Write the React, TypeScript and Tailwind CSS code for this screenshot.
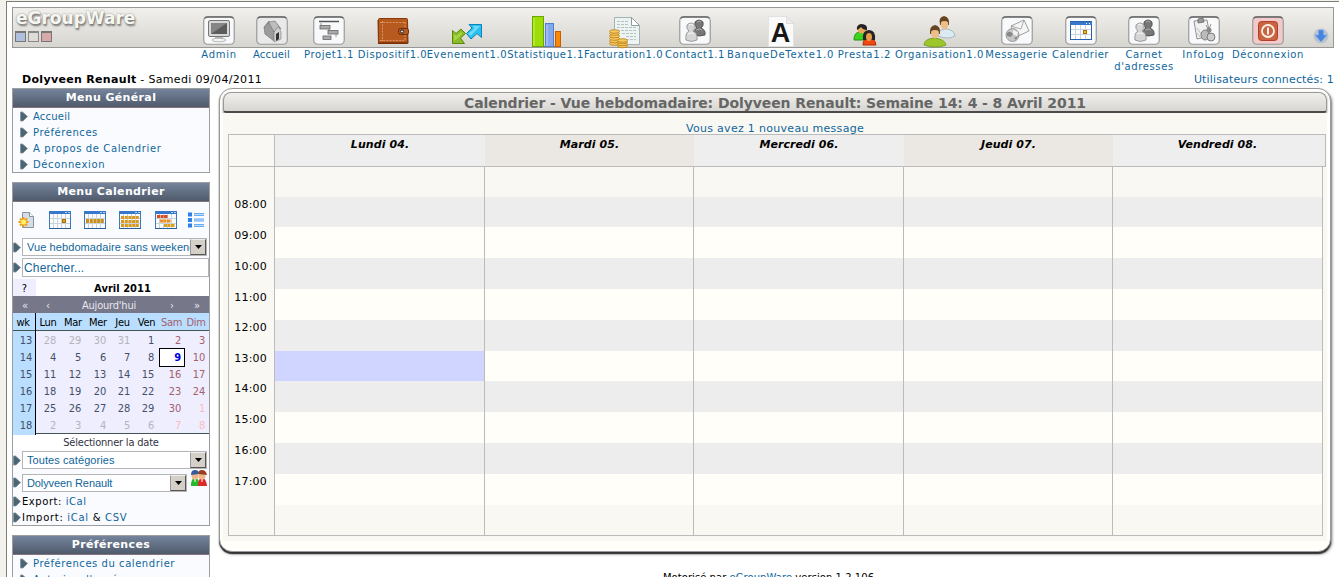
import React from "react";

type K = string;

function Art({ k }: { k: K }) {
  switch (k) {
    case "admin":
      return (
        <g>
          <rect x="5.500" y="5.500" width="21" height="16" rx="1.500" fill="#d8d8d8" stroke="#777" />
          <rect x="8" y="8" width="16" height="11" fill="#5c5c5c" />
          <path d="M8 19V8h16z" fill="#858585" />
          <path d="M12 22h8l-1 3h-6z" fill="#bbb" />
          <ellipse cx="16" cy="25" rx="7" ry="1.800" fill="#f4f4f4" stroke="#999" strokeWidth=".7" />
        </g>
      );
    case "home":
      return (
        <g>
          <path d="m8 12 5-6 5 9v11l-9-7z" fill="#9b9b9b" stroke="#777" strokeWidth=".7" />
          <path d="m18 16 4-6 3 7v7l-7 3z" fill="#d2d2d2" stroke="#888" strokeWidth=".7" />
          <path d="m8 12 5-5 6-1 6 8-3-2-4 5-5-9-4 5z" fill="#bdbdbd" stroke="#777" strokeWidth=".7" />
          <path d="M20 26v-7l3-2v7z" fill="#333" />
        </g>
      );
    case "project":
      return (
        <g>
          <path d="M6 6.500h20" stroke="#555" strokeWidth="1.500" />
          <path d="M8 8v3M16 13v3M23 18v4" stroke="#999" />
          <g fill="#aaa" stroke="#666" strokeWidth=".8">
            <rect x="7" y="10.500" width="10" height="3.500" />
            <rect x="15" y="15.500" width="10" height="3.500" />
            <rect x="10" y="21" width="8" height="3.500" />
          </g>
        </g>
      );
    case "wallet":
      return (
        <g>
          <path d="M.5 4h30.500l.5 23-1 1H1z" fill="#7c3008" />
          <rect x="1.500" y="2.500" width="29" height="24" rx="1" fill="#b65a20" stroke="#8a3b0c" />
          <path d="M3 6.500h26M3 24.500h24M5.500 5v20M28 6v19" stroke="#e8a374" strokeDasharray="2 1.200" strokeWidth=".8" fill="none" />
          <rect x="21.500" y="12.500" width="10" height="6" rx="2" fill="#b65a20" stroke="#6e2c08" />
          <circle cx="25" cy="15.500" r="1.600" fill="#ddd" stroke="#222" />
        </g>
      );
    case "event":
      return (
        <g strokeLinejoin="round">
          <path d="M1.500 27.500V14.500l3.500 3 5-4.500 4.500 4.500-5 4.500 4 5.500z" fill="#8abb28" stroke="#5c8a0a" />
          <path d="M3 25v-7l2.500 2 4.500-4 1.500 1.500-5 5z" fill="#a9d444" />
          <path d="M30.500 8.500H18l3 3.500-5.500 5.500 4.500 5.500 6-5.500 4.500 4z" fill="#2bc0f0" stroke="#0983bb" />
          <path d="M29 10h-7l1.500 2.500-6 5 2 2.500z" fill="#6fdcfb" />
        </g>
      );
    case "stats":
      return (
        <g>
          <path d="M2 30.500h29" stroke="#777" />
          <rect x="2.500" y=".5" width="11" height="30" fill="#9ddd08" stroke="#6ba500" />
          <path d="M4 2v28" stroke="#c8f558" />
          <rect x="15.500" y="7.500" width="8" height="23" fill="#83a9ec" stroke="#557fcb" />
          <path d="M17 9v21" stroke="#b8d0ff" />
          <rect x="25.500" y="15.500" width="5" height="15" fill="#f98806" stroke="#cd5b00" />
        </g>
      );
    case "invoice":
      return (
        <g>
          <path d="M6.500 1.500h17l8 8v19h-25z" fill="#edf3f2" stroke="#a5b3b3" />
          <path d="M23.500 1.500v8h8z" fill="#fff" stroke="#8e9c9c" />
          <path d="M9 5.500h11M9 8.500h12M9 11.500h19M9 14.500h19M14 17.500h14M18 20.500h10M18 23.500h10" stroke="#b7c3c3" strokeDasharray="3 1" />
          <g fill="#f6c95c" stroke="#b77b14" strokeWidth=".8">
            {[27.5, 25, 22.5, 20, 17.5, 15.5].map((y) => <ellipse key={y} cx="6.500" cy={y} rx="5" ry="1.800" />)}
            {[30, 28, 26, 24.5].map((y) => <ellipse key={y} cx="14.500" cy={y} rx="5" ry="1.800" />)}
          </g>
        </g>
      );
    case "people":
      return (
        <g strokeWidth=".8">
          <path d="M15 20q0-6 3-7-3-2-2-6 4-4 8 0 1 4-2 6 5 2 4 7-6 2-11 0z" fill="#777" stroke="#444" />
          <path d="M18 7q3-2 4 0M17 15q4-2 6 0" stroke="#bbb" fill="none" />
          <path d="M7 25q-1-7 3-9-3-2-2-6 4-4 8 0 1 4-2 6 5 2 4 9-6 3-11 0z" fill="#d5d5d5" stroke="#888" />
          <path d="M10 10q2-2 4 0M9 19q4-2 6 0" stroke="#fff" fill="none" />
        </g>
      );
    case "text":
      return (
        <g>
          <path d="M3.500.5h18l7 7v23h-25z" fill="#fafafa" stroke="#e2e2e2" />
          <path d="M21.500.5v7h7z" fill="#eee" stroke="#ddd" />
          <text x="16" y="26" textAnchor="middle" fontFamily="Liberation Sans" fontWeight="bold" fontSize="27" fill="#171717">A</text>
        </g>
      );
    case "duo":
      return (
        <g>
          <path d="M5 24q0-8 6-8 7 0 8 8z" fill="#3bd51d" stroke="#22930e" />
          <circle cx="13" cy="13" r="4.500" fill="#eba75b" />
          <path d="M8 14q-1-5 4-6 7 0 6 6-4 0-6-3-2 2-4 3z" fill="#222" />
          <path d="M14 29q0-7 6-7 6 0 7 7z" fill="#f04812" stroke="#b52f05" />
          <path d="M14 24q-1-10 6-10t6 10z" fill="#252525" />
          <ellipse cx="20" cy="21" rx="3" ry="4" fill="#e79c4b" />
        </g>
      );
    case "org":
      return (
        <g>
          <path d="M14 20q0-6 7-7 9 0 10 7-7 4-17 0z" fill="#dcebf2" stroke="#96b1bd" strokeWidth=".8" />
          <path d="M16 9q-2-8 4-9 6 1 5 9z" fill="#684521" />
          <ellipse cx="20.500" cy="8.500" rx="3.700" ry="5" fill="#edbe8a" />
          <path d="M16.500 6q1-4 4-4t4 4q-4-2-8 0z" fill="#684521" />
          <path d="M0 29q0-6 10-7 11 1 12 7-10 4-22 0z" fill="#9dc62b" stroke="#6d9812" strokeWidth=".8" />
          <path d="M6 18q-1-8 5-9 6 1 5 9z" fill="#684521" />
          <ellipse cx="11" cy="17.500" rx="4" ry="5" fill="#edbe8a" />
          <path d="M7 15q1-4 4-4t4 4q-4-2-8 0z" fill="#684521" />
        </g>
      );
    case "mail":
      return (
        <g strokeWidth=".8">
          <path d="m10 11 13-6 5 11-13 6z" fill="#f5f5f5" stroke="#888" />
          <path d="m10 11 10 3 3-9" fill="none" stroke="#999" />
          <circle cx="11.500" cy="20" r="6.500" fill="#c6c6c6" stroke="#888" />
          <path d="M6 18q3-3 6 1l-2 3-4-1zM13 23l4-2-2 4z" fill="#888" />
          <path d="m12 15 5 2-1 4-4-2z" fill="#f2f2f2" />
        </g>
      );
    case "calendar":
      return (
        <g>
          <rect x="5.500" y="6.500" width="21" height="18" fill="#fff" stroke="#2862ae" />
          <path d="M5 7h22v3H5z" fill="#3878ca" />
          <path d="M21 8.500h1M24 8.500h1" stroke="#fff" />
          <path d="M6 14.500h20M6 19.500h20M10.500 10v14M15.500 10v14M20.500 10v14" stroke="#ccd4df" />
          <rect x="18.500" y="15.500" width="3" height="3" fill="#f5b428" stroke="#a96f00" />
        </g>
      );
    case "infolog":
      return (
        <g strokeWidth=".8">
          <path d="m6 6 13-1 3 16-13 3z" fill="#f1f1f1" stroke="#777" />
          <path d="m10 4 5-1 1 4-6 1z" fill="#999" stroke="#666" />
          <path d="M18 10l2 4M23 9l-2 5" stroke="#777" />
          <ellipse cx="17" cy="20" rx="4" ry="5" fill="#bbb" stroke="#666" />
          <circle cx="23" cy="22" r="4" fill="#ccc" stroke="#666" />
          <circle cx="21" cy="15" r="2.500" fill="#888" />
          <path d="m9 13 4 6M9 18l3 4" stroke="#aaa" />
        </g>
      );
    default:
      return (
        <g>
          <rect x="6.500" y="6.500" width="19" height="19" rx="3" fill="#c96443" stroke="#ae3f28" />
          <circle cx="16" cy="16" r="6" fill="none" stroke="#fff0e5" strokeWidth="1.800" />
          <path d="M16 12.500v7" stroke="#fff" strokeWidth="1.800" />
        </g>
      );
  }
}

const apps = [
  { n: "Admin", k: "admin", f: 1, c: "ml-[188px] w-[36px] tracking-[0.7px]" },
  { n: "Accueil", k: "home", f: 1, c: "ml-[16px] w-[37px] tracking-[0.2px]" },
  { n: "Projet1.1", k: "project", f: 1, c: "ml-[14px] w-[50px] tracking-[0.6px]" },
  { n: "Dispositif1.0", k: "wallet", f: 0, c: "ml-[4px] w-[69px] tracking-[0.55px]" },
  { n: "Evenement1.0", k: "event", f: 0, c: "w-[80px] tracking-[0.65px]" },
  { n: "Statistique1.1", k: "stats", f: 0, c: "w-[77px] tracking-[0.5px]" },
  { n: "Facturation1.0", k: "invoice", f: 0, c: "w-[79px] tracking-[0.5px]" },
  { n: "Contact1.1", k: "people", f: 1, c: "ml-[2px] w-[60px] tracking-[0.5px]" },
  { n: "BanqueDeTexte1.0", k: "text", f: 0, c: "ml-[2px] w-[107px] tracking-[0.8px]" },
  { n: "Presta1.2", k: "duo", f: 0, c: "ml-[4px] w-[53px] tracking-[0.7px]" },
  { n: "Organisation1.0", k: "org", f: 0, c: "ml-[4px] w-[89px] tracking-[0.6px]" },
  { n: "Messagerie", k: "mail", f: 1, c: "ml-px w-[63px] tracking-[0.55px]" },
  { n: "Calendrier", k: "calendar", f: 1, c: "ml-[4px] w-[57px] tracking-[0.5px]" },
  { n: "Carnet\nd'adresses", k: "people", f: 1, c: "ml-[5px] w-[60px] tracking-[0.6px]" },
  { n: "InfoLog", k: "infolog", f: 1, c: "ml-[8px] w-[43px] tracking-[0.8px]" },
  { n: "Déconnexion", k: "off", f: 2, c: "ml-[7px] w-[72px] tracking-[0.6px]" },
];

function AppItem({ n, k, f, c }: { n: string; k: K; f: number; c: string }) {
  return (
    <div className={`flex shrink-0 flex-col items-center text-center text-[10px] leading-[12px] text-[#0f669b] ${c}`}>
      <svg width="32" height="32" viewBox="0 0 32 32" className="mt-2 shrink-0 overflow-visible">
        {f > 0 && (
          <>
            <rect x=".75" y=".75" width="30.500" height="27.500" rx="4" fill={f === 2 ? "#f3c9c9" : k === "home" ? "#e9e9e9" : "#f8f9fb"} stroke="#9b9b9b" strokeWidth="1.200" />
            <path d="M2 2.500Q2 1 5 1h22q3 0 3 1.500" stroke="#666" strokeWidth="1.500" fill="none" />
          </>
        )}
        <g transform={f > 0 ? "translate(0 -1)" : undefined}><Art k={k} /></g>
      </svg>
      <span className="mt-px whitespace-pre">{n}</span>
    </div>
  );
}

function Arrow({ className = "" }: { className?: string }) {
  return (
    <svg width="8" height="11" viewBox="0 0 8 11" className={`shrink-0 ${className}`}>
      <path d="M.5 1h2L7.500 5.500 3 10H.5z" fill="#4b6575" stroke="#7d939e" strokeWidth=".8" />
    </svg>
  );
}

function Box({ title, children, className = "" }: { title: string; children: React.ReactNode; className?: string }) {
  return (
    <section className={`w-[198px] shrink-0 border border-[#9c9da1] bg-[#fafbff] ${className}`}>
      <h2 className="h-[19px] border-b border-[#85747c] bg-linear-to-b from-[#75849c] to-[#4f5a6b] text-center text-[11px] leading-[17px] font-bold tracking-[0.350px] text-white">
        {title}
      </h2>
      {children}
    </section>
  );
}

function MenuLink({ t, c }: { t: string; c: string }) {
  return (
    <li className={`flex h-4 items-center pl-[7px] text-[10px] text-[#0f669b] ${c}`}>
      <Arrow className="mr-[5px]" />
      {t}
    </li>
  );
}

function ViewIcon({ v }: { v: number }) {
  return (
    <svg width="22" height="18" viewBox="0 0 22 18">
      <path d="M1 7.500h20M1 12.500h20M4.500 3v14M8.500 3v14M12.500 3v14M16.500 3v14" stroke="#cbd3da" />
      <rect x=".5" y=".5" width="21" height="17" fill="none" stroke="#3e7abd" />
      <path d="M0 0h22v3H0z" fill="#3878ca" />
      <path d="M0 17.500h22" stroke="#2a5f9e" />
      <path d="M16 1.500h2M19 1.500h2" stroke="#b4d0f5" />
      {v === 1 && <rect x="13.500" y="8.500" width="3" height="3" fill="#dca21e" stroke="#a97508" />}
      {v === 2 && <path d="M2 10h18" stroke="#c99019" strokeWidth="4" strokeDasharray="3 .7" />}
      {v === 3 && <path d="M2 6.500h18M2 10.500h18M2 14.500h18" stroke="#d69a1c" strokeWidth="3.200" strokeDasharray="3 .7" />}
      {v === 4 && (
        <g strokeWidth="3.200" strokeDasharray="3 .5">
          <path d="M2 5.500h11" stroke="#dc4b1e" />
          <path d="M5 10h11" stroke="#ee8c1c" />
          <path d="M9 14.500h11" stroke="#dba01c" />
        </g>
      )}
    </svg>
  );
}

function Select({ t, c }: { t: string; c: string }) {
  return (
    <div className={`flex h-[18px] shrink-0 border border-[#b5b5b5] bg-white font-['Liberation_Sans'] text-[11px] leading-[17px] text-[#0f669b] ${c}`}>
      <span className="min-w-0 grow overflow-hidden pl-1 whitespace-nowrap">{t}</span>
      <span className="flex w-4 shrink-0 items-center justify-center border border-t-[#eee] border-r-[#555] border-b-[#555] border-l-[#999] bg-[#d4d0c8]">
        <svg width="7" height="4" viewBox="0 0 7 4"><path d="M0 0h7L3.500 4z" fill="#000" /></svg>
      </span>
    </div>
  );
}

const weeks = [
  [13, 28, 29, 30, 31, 1, 2, 3],
  [14, 4, 5, 6, 7, 8, 9, 10],
  [15, 11, 12, 13, 14, 15, 16, 17],
  [16, 18, 19, 20, 21, 22, 23, 24],
  [17, 25, 26, 27, 28, 29, 30, 1],
  [18, 2, 3, 4, 5, 6, 7, 8],
];

function dayClass(r: number, i: number, d: number) {
  if (r === 1 && d === 9) return "border border-black bg-white font-bold text-[#0000dd] leading-[17px] pr-[3px]";
  const out = (r === 0 && d > 20) || r === 5 || (r === 4 && d === 1);
  if (i >= 6) return out ? "text-[#fbbcc0] pr-[4px]" : "text-[#a5606c] pr-[4px]";
  return out ? "text-[#b4b4bb] pr-[5px]" : "text-[#455068] pr-[5px]";
}

const cols = "grid grid-cols-[23px_25px_25px_25px_24px_24px_26px_24px]";

function MiniCalendar() {
  return (
    <div className="bg-white font-['DejaVu_Sans_Condensed','DejaVu_Sans'] text-[11px]">
      <div className="flex h-[17px] leading-[19px] text-black">
        <span className="w-[23px] bg-[#eeeeff] text-center">?</span>
        <b className="grow text-center text-[11px] tracking-[0.050px]">Avril 2011</b>
      </div>
      <div className="flex h-[17px] justify-between bg-[#77778a] pr-[9px] pl-[9px] leading-[19px] text-[#e8e8ee]">
        <span className="w-[24px]">«</span><span className="w-[16px]">‹</span>
        <span className="grow text-center tracking-[-0.200px]">Aujourd'hui</span>
        <span className="w-[18px] text-right">›</span><span className="w-[26px] text-right">»</span>
      </div>
      <div className={`${cols} h-[18px] border-b border-[#455] bg-[#b9deff] leading-[19px] tracking-[-0.300px] text-black`}>
        <span className="border-r border-black pr-[2px] text-center">wk</span>
        {["Lun", "Mar", "Mer", "Jeu", "Ven"].map((d) => <span key={d} className="pr-px text-center">{d}</span>)}
        <span className="pr-px text-center text-[#a5606c]">Sam</span>
        <span className="pr-[2px] text-center text-[#a5606c]">Dim</span>
      </div>
      {weeks.map((w, r) => (
        <div key={r} className={`${cols} h-[17px] bg-[#eeeeff] text-right leading-[19px] tracking-[-0.200px]`}>
          {w.map((d, i) =>
            i === 0 ? (
              <span key={i} className="border-r border-black bg-[#b9deff] pr-[3px] text-[#455068]">{d}</span>
            ) : (
              <span key={i} className={dayClass(r, i, d)}>{d}</span>
            ),
          )}
        </div>
      ))}
      <div className="h-[17px] border-t border-[#455] text-center leading-[17px] tracking-[-0.200px] text-[#334]">Sélectionner la date</div>
    </div>
  );
}

const days = ["Lundi 04.", "Mardi 05.", "Mercredi 06.", "Jeudi 07.", "Vendredi 08."];
const hours = ["", "08:00", "09:00", "10:00", "11:00", "12:00", "13:00", "14:00", "15:00", "16:00", "17:00", ""];
const heights = ["h-[30px]", "h-[30px]", "h-[31px]", "h-[31px]", "h-[31px]", "h-[31px]", "h-[30px]", "h-[31px]", "h-[31px]", "h-[31px]", "h-[31px]", "h-[30px]"];
const gridCols = "grid grid-cols-[46px_210px_209px_210px_209px_209px]";

function WeekGrid() {
  return (
    <div className="w-[1098px] text-[11px] text-black">
      <div className={`${gridCols} h-[33px] w-[1098px] border border-[#bbb] bg-[#ededed]`}>
        <span className="border-r border-[#bbb] bg-[#f9f8f3]" />
        {days.map((d, i) => (
          <span key={d} className={`text-center text-[11px] leading-[19px] font-bold tracking-[0.080px] italic ${i % 2 ? "bg-[#ebe8e3]" : "bg-[#eeeeee]"}`}>{d}</span>
        ))}
      </div>
      <div className="w-[1095px] border-x border-b border-[#bbb]">
        {hours.map((h, r) => (
          <div key={r} className={`${gridCols} ${heights[r]}`}>
            <span className={`border-r border-[#bbb] bg-[#f9f8f3] pr-[7px] text-right text-[11px] tracking-[0.200px] ${r > 1 && r < 5 ? "leading-[17px]" : "leading-[15px]"}`}>{h}</span>
            {days.map((d, i) => (
              <span
                key={d}
                className={`${i < 4 ? "border-r border-[#bbb]" : ""} ${
                  r === 6 && i === 0 ? "bg-[#d0d5ff]" : r === 0 || r === 11 ? "bg-[#f9f8f3]" : r % 2 ? "bg-[#ededed]" : "bg-[#fffef8]"
                }`}
              />
            ))}
          </div>
        ))}
      </div>
    </div>
  );
}

export default function App() {
  return (
    <div className="flex h-[577px] w-[1339px] overflow-hidden bg-[#f3f1ec] pt-px pl-[6px] font-['DejaVu_Sans',sans-serif] text-[11px] text-black">
      <div className="w-[1333px] shrink-0 border-t border-l border-[#7e7e76] bg-white pt-[5px] pl-[5px]">
        <header className="flex h-[41px] w-[1322px] items-start border border-[#979797] bg-linear-to-b from-[#f2f0ec] to-[#d6d5d0]">
          <div className="w-0 shrink-0 whitespace-nowrap">
            <div className="ml-[3px] text-[17px] leading-[20px] font-bold text-[#f7f7f2] [text-shadow:1px_2px_2px_#777,0_0_2px_#888]">eGroupWare</div>
            <div className="mt-[3px] ml-[2px] flex gap-[2px]">
              <span className="h-[11px] w-[11px] shrink-0 border border-t-2 border-[#777] bg-[#afc0df]" />
              <span className="h-[11px] w-[11px] shrink-0 border border-t-2 border-[#888] bg-[#dddcd8]" />
              <span className="h-[11px] w-[11px] shrink-0 border border-t-2 border-[#777] bg-[#d9a9aa]" />
            </div>
          </div>
          {apps.map((a) => <AppItem key={a.n} {...a} />)}
          <svg width="16" height="16" viewBox="0 0 16 16" className="mt-5 ml-[9px] shrink-0">
            <circle cx="8" cy="8" r="7.500" fill="#bdc3ce" />
            <path d="M5.500 2h5v5h3.500l-6 7-6-7h3.500z" fill="#4685df" stroke="#7eabed" strokeWidth=".7" />
          </svg>
        </header>

        <div className="flex h-[40px] items-end justify-between pr-[5px] pl-[10px]">
          <span className="leading-[17px] tracking-[0.320px]"><b>Dolyveen Renault</b> - Samedi 09/04/2011</span>
          <span className="leading-[17px] tracking-[0.150px] text-[#0f669b]">Utilisateurs connectés: 1</span>
        </div>

        <div className="flex">
          <aside className="flex w-[207px] shrink-0 flex-col">
            <Box title="Menu Général" className="h-[85px]">
              <ul>
                <MenuLink t="Accueil" c="tracking-[0.200px]" />
                <MenuLink t="Préférences" c="tracking-[0.550px]" />
                <MenuLink t="A propos de Calendrier" c="tracking-[0.620px]" />
                <MenuLink t="Déconnexion" c="tracking-[0.620px]" />
              </ul>
            </Box>
            <Box title="Menu Calendrier" className="mt-[9px] h-[344px]">
              <div className="flex h-[36px] items-center pb-px pl-[5px]">
                <svg width="17" height="18" viewBox="0 0 17 18">
                  <path d="M4.500 1.500h7l4 4v11h-11z" fill="#d5dde8" stroke="#8993a0" />
                  <path d="M11.500 1.500v4h4" fill="#fff" stroke="#8993a0" />
                  <path d="M5.500 6v10M.5 11h10M2 7.500l7 7M9 7.500l-7 7" stroke="#f0a010" strokeWidth="2" />
                  <circle cx="5.500" cy="11" r="2.500" fill="#fff36a" />
                </svg>
                <span className="ml-[14px] flex gap-[13px]"><ViewIcon v={1} /><ViewIcon v={2} /><ViewIcon v={3} /></span>
                <span className="ml-[14px]"><ViewIcon v={4} /></span>
                <svg width="16" height="16" viewBox="0 0 16 16" className="ml-[11px]">
                  <path d="M0 2.500h4M0 8h4M0 13.500h4" stroke="#2d7fe9" strokeWidth="4" />
                  <path d="M6 2.500h10M6 8h10M6 13.500h10" stroke="#68acf5" strokeWidth="3" />
                  <path d="M6 2.500h10M6 8h10M6 13.500h10" stroke="#b5d9ff" />
                </svg>
              </div>
              <div className="flex items-center"><Arrow className="mr-px" /><Select t="Vue hebdomadaire sans weekend" c="w-[185px] tracking-[0.090px]" /></div>
              <div className="mt-[2px] flex items-center">
                <Arrow className="mr-px" />
                <span className="h-[19px] w-[187px] border border-[#b5b5b5] bg-white pl-px font-['Liberation_Sans'] text-[12px] leading-[18px] tracking-[0.150px] text-[#0f669b]">Chercher...</span>
              </div>
              <div className="mt-[2px]"><MiniCalendar /></div>
              <div className="mt-px flex items-center"><Arrow className="mr-px" /><Select t="Toutes catégories" c="w-[185px] tracking-[0.080px]" /></div>
              <div className="mt-px flex h-[22px] items-start">
                <Arrow className="mt-[7px] mr-px" />
                <Select t="Dolyveen Renault" c="mt-1 w-[165px] tracking-[-0.100px]" />
                <svg width="17" height="17" viewBox="0 0 17 17" className="ml-[3px] shrink-0">
                  <path d="M1 16q0-8 4-8t5 8z" fill="#28b62b" />
                  <path d="M8 16q0-8 4-8t5 8z" fill="#d92a28" />
                  <circle cx="5" cy="6" r="3.500" fill="#efb68b" /><path d="M1 5q0-5 4-5t4 4z" fill="#345b9d" />
                  <circle cx="12" cy="6" r="3.500" fill="#efb68b" /><path d="M8 4q0-4 4-4t5 5z" fill="#963e24" />
                  <path d="M5 9v3M12 9v3" stroke="#fff" />
                </svg>
              </div>
              <div className="mt-px flex h-4 items-center text-[10px] tracking-[0.550px]"><Arrow className="mr-px" /><span>Export: <span className="text-[#0f669b]">iCal</span></span></div>
              <div className="flex h-4 items-center text-[10px] tracking-[0.700px]"><Arrow className="mr-px" /><span>Import: <span className="text-[#0f669b]">iCal</span> &amp; <span className="text-[#0f669b]">CSV</span></span></div>
            </Box>
            <Box title="Préférences" className="mt-[9px] h-[90px]">
              <ul>
                <MenuLink t="Préférences du calendrier" c="tracking-[0.550px]" />
                <MenuLink t="Autorise d'accés" c="tracking-[0.550px]" />
              </ul>
            </Box>
          </aside>

          <main className="w-[1112px] shrink-0">
            <div className="h-[464px] w-[1112px] rounded-[13px] border border-[#999] bg-[#fffef8] px-[3px] pt-[3px] shadow-[inset_0_0_0_1px_#fff,0_2px_1px_#333,1px_2px_3px_#777]">
              <h1 className="h-[21px] rounded-t-[8px] rounded-b-[3px] border border-b-2 border-[#999] border-b-[#4b4b4b] bg-linear-to-b from-[#f0efeb] to-[#d7d6d2] text-center text-[14px] leading-[20px] font-bold tracking-[-0.090px] text-[#666] shadow-[0_1px_2px_#777]">
                Calendrier - Vue hebdomadaire: Dolyveen Renault: Semaine 14: 4 - 8 Avril 2011
              </h1>
              <div className="h-[428px] bg-[#f9f8f3] pt-[7px] pl-[5px]">
                <p className="h-[14px] pr-[5px] text-center text-[11px] leading-[17px] tracking-[0.300px] text-[#0f669b]">Vous avez 1 nouveau message</p>
                <WeekGrid />
              </div>
            </div>
            <p className="mt-[17px] pr-[13px] text-center text-[10px] leading-[17px] tracking-[0.050px]">Motorisé par <span className="text-[#0f669b]">eGroupWare</span> version 1.2.106</p>
          </main>
        </div>
      </div>
    </div>
  );
}
